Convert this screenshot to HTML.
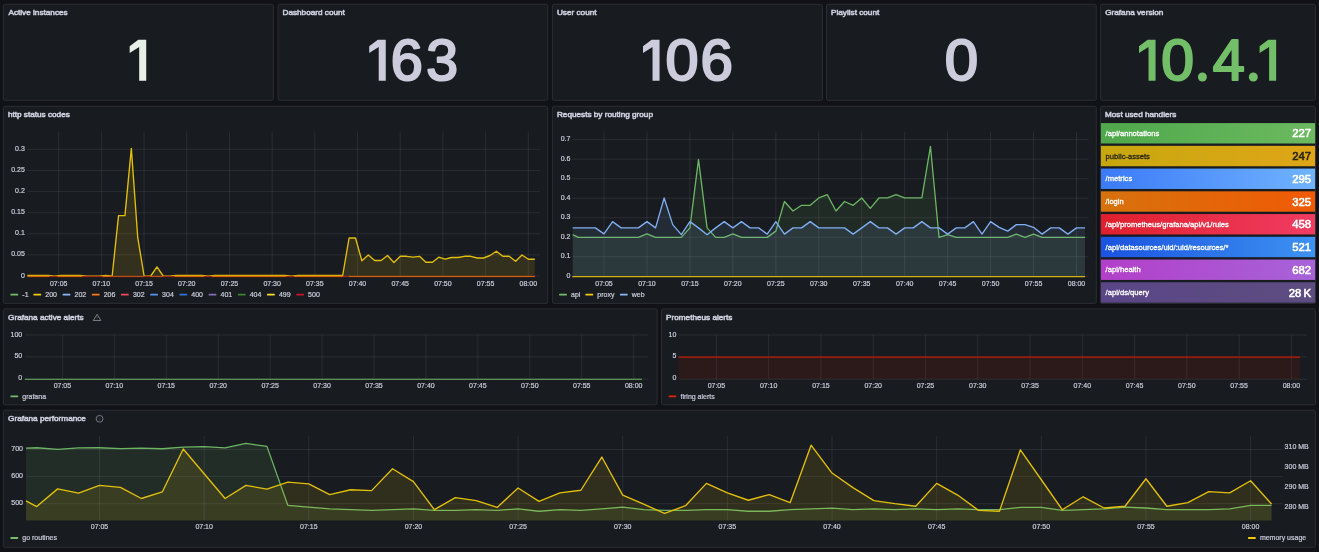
<!DOCTYPE html>
<html><head><meta charset="utf-8"><title>Grafana</title>
<style>
html,body{margin:0;padding:0;background:#111217;}
body{width:1319px;height:552px;overflow:hidden;font-family:"Liberation Sans",sans-serif;}
svg{display:block;font-family:"Liberation Sans",sans-serif;will-change:transform;}
text{white-space:pre;}
.big{letter-spacing:-1px;}
</style></head><body>
<svg width="1319" height="552" viewBox="0 0 1319 552">
<rect width="1319" height="552" fill="#111217"/>
<rect x="3.3" y="4.3" width="270.00" height="96.00" rx="1.6" fill="#181b1f" stroke="#2a2d33" stroke-width="1"/>
<rect x="278.0" y="4.3" width="269.80" height="96.00" rx="1.6" fill="#181b1f" stroke="#2a2d33" stroke-width="1"/>
<rect x="552.4" y="4.3" width="270.00" height="96.00" rx="1.6" fill="#181b1f" stroke="#2a2d33" stroke-width="1"/>
<rect x="826.5" y="4.3" width="269.80" height="96.00" rx="1.6" fill="#181b1f" stroke="#2a2d33" stroke-width="1"/>
<rect x="1100.4" y="4.3" width="215.00" height="96.00" rx="1.6" fill="#181b1f" stroke="#2a2d33" stroke-width="1"/>
<rect x="3.3" y="106.3" width="544.50" height="197.10" rx="1.6" fill="#181b1f" stroke="#2a2d33" stroke-width="1"/>
<rect x="552.4" y="106.3" width="543.90" height="197.10" rx="1.6" fill="#181b1f" stroke="#2a2d33" stroke-width="1"/>
<rect x="1100.4" y="106.3" width="215.00" height="197.10" rx="1.6" fill="#181b1f" stroke="#2a2d33" stroke-width="1"/>
<rect x="3.3" y="308.9" width="653.80" height="95.90" rx="1.6" fill="#181b1f" stroke="#2a2d33" stroke-width="1"/>
<rect x="661.5" y="308.9" width="653.90" height="95.90" rx="1.6" fill="#181b1f" stroke="#2a2d33" stroke-width="1"/>
<rect x="3.3" y="410.2" width="1312.10" height="137.10" rx="1.6" fill="#181b1f" stroke="#2a2d33" stroke-width="1"/>
<text transform="translate(8.46,15.10) scale(1.08,1)" font-size="7.6" text-anchor="start" fill="#ccccdc" font-weight="normal" stroke="#ccccdc" stroke-width="0.55">Active instances</text>
<text transform="translate(282.51,15.10) scale(1.08,1)" font-size="7.6" text-anchor="start" fill="#ccccdc" font-weight="normal" stroke="#ccccdc" stroke-width="0.55">Dashboard count</text>
<text transform="translate(556.95,15.10) scale(1.08,1)" font-size="7.6" text-anchor="start" fill="#ccccdc" font-weight="normal" stroke="#ccccdc" stroke-width="0.55">User count</text>
<text transform="translate(831.01,15.10) scale(1.08,1)" font-size="7.6" text-anchor="start" fill="#ccccdc" font-weight="normal" stroke="#ccccdc" stroke-width="0.55">Playlist count</text>
<text transform="translate(1105.17,15.10) scale(1.08,1)" font-size="7.6" text-anchor="start" fill="#ccccdc" font-weight="normal" stroke="#ccccdc" stroke-width="0.55">Grafana version</text>
<text transform="translate(7.91,117.10) scale(1.08,1)" font-size="7.6" text-anchor="start" fill="#ccccdc" font-weight="normal" stroke="#ccccdc" stroke-width="0.55">http status codes</text>
<text transform="translate(556.91,117.10) scale(1.08,1)" font-size="7.6" text-anchor="start" fill="#ccccdc" font-weight="normal" stroke="#ccccdc" stroke-width="0.55">Requests by routing group</text>
<text transform="translate(1104.91,117.10) scale(1.08,1)" font-size="7.6" text-anchor="start" fill="#ccccdc" font-weight="normal" stroke="#ccccdc" stroke-width="0.55">Most used handlers</text>
<text transform="translate(8.07,319.60) scale(1.08,1)" font-size="7.6" text-anchor="start" fill="#ccccdc" font-weight="normal" stroke="#ccccdc" stroke-width="0.55">Grafana active alerts</text>
<text transform="translate(666.01,319.60) scale(1.08,1)" font-size="7.6" text-anchor="start" fill="#ccccdc" font-weight="normal" stroke="#ccccdc" stroke-width="0.55">Prometheus alerts</text>
<text transform="translate(8.07,421.00) scale(1.08,1)" font-size="7.6" text-anchor="start" fill="#ccccdc" font-weight="normal" stroke="#ccccdc" stroke-width="0.55">Grafana performance</text>
<polygon points="146.22,39.76 138.28,39.76 129.66,46.33 129.66,52.91 139.19,47.01 139.19,80.85 146.22,80.85" fill="#e8efe6"/>
<polygon points="385.76,39.76 377.82,39.76 369.20,46.33 369.20,52.91 378.73,47.01 378.73,80.85 385.76,80.85" fill="#ccccdc"/>
<text transform="translate(390.77,80.34) scale(1.0114,1.0060)" font-size="57.0" fill="#ccccdc" stroke="#ccccdc" stroke-width="2.181" stroke-linejoin="round">6</text>
<text transform="translate(426.32,80.34) scale(1.0028,1.0060)" font-size="57.0" fill="#ccccdc" stroke="#ccccdc" stroke-width="2.190" stroke-linejoin="round">3</text>
<polygon points="659.56,39.76 651.62,39.76 643.00,46.33 643.00,52.91 652.53,47.01 652.53,80.85 659.56,80.85" fill="#ccccdc"/>
<text transform="translate(665.38,80.34) scale(1.0424,1.0060)" font-size="57.0" fill="#ccccdc" stroke="#ccccdc" stroke-width="2.148" stroke-linejoin="round">0</text>
<text transform="translate(700.54,80.34) scale(1.0228,1.0060)" font-size="57.0" fill="#ccccdc" stroke="#ccccdc" stroke-width="2.169" stroke-linejoin="round">6</text>
<text transform="translate(944.75,80.34) scale(1.0534,1.0060)" font-size="57.0" fill="#ccccdc" stroke="#ccccdc" stroke-width="2.137" stroke-linejoin="round">0</text>
<polygon points="1155.56,39.76 1147.62,39.76 1139.00,46.33 1139.00,52.91 1148.53,47.01 1148.53,80.85 1155.56,80.85" fill="#73BF69"/>
<text transform="translate(1161.20,80.34) scale(1.0313,1.0060)" font-size="57.0" fill="#73BF69" stroke="#73BF69" stroke-width="2.160" stroke-linejoin="round">0</text>
<circle cx="1202.4" cy="77.0" r="4.5" fill="#73BF69"/>
<text transform="translate(1212.78,79.75) scale(1.0095,0.9917)" font-size="57.0" fill="#73BF69" stroke="#73BF69" stroke-width="2.199" stroke-linejoin="round">4</text>
<circle cx="1253.3" cy="77.0" r="4.5" fill="#73BF69"/>
<polygon points="1276.16,39.76 1268.22,39.76 1259.60,46.33 1259.60,52.91 1269.13,47.01 1269.13,80.85 1276.16,80.85" fill="#73BF69"/>
<line x1="27.4" x2="539.7" y1="276.00" y2="276.00" stroke="rgba(204,204,220,0.10)" stroke-width="1"/>
<line x1="27.4" x2="539.7" y1="254.89" y2="254.89" stroke="rgba(204,204,220,0.10)" stroke-width="1"/>
<line x1="27.4" x2="539.7" y1="233.78" y2="233.78" stroke="rgba(204,204,220,0.10)" stroke-width="1"/>
<line x1="27.4" x2="539.7" y1="212.68" y2="212.68" stroke="rgba(204,204,220,0.10)" stroke-width="1"/>
<line x1="27.4" x2="539.7" y1="191.57" y2="191.57" stroke="rgba(204,204,220,0.10)" stroke-width="1"/>
<line x1="27.4" x2="539.7" y1="170.46" y2="170.46" stroke="rgba(204,204,220,0.10)" stroke-width="1"/>
<line x1="27.4" x2="539.7" y1="149.35" y2="149.35" stroke="rgba(204,204,220,0.10)" stroke-width="1"/>
<line x1="58.69" x2="58.69" y1="131.5" y2="276.0" stroke="rgba(204,204,220,0.10)" stroke-width="1"/>
<line x1="101.38" x2="101.38" y1="131.5" y2="276.0" stroke="rgba(204,204,220,0.10)" stroke-width="1"/>
<line x1="144.07" x2="144.07" y1="131.5" y2="276.0" stroke="rgba(204,204,220,0.10)" stroke-width="1"/>
<line x1="186.77" x2="186.77" y1="131.5" y2="276.0" stroke="rgba(204,204,220,0.10)" stroke-width="1"/>
<line x1="229.46" x2="229.46" y1="131.5" y2="276.0" stroke="rgba(204,204,220,0.10)" stroke-width="1"/>
<line x1="272.15" x2="272.15" y1="131.5" y2="276.0" stroke="rgba(204,204,220,0.10)" stroke-width="1"/>
<line x1="314.84" x2="314.84" y1="131.5" y2="276.0" stroke="rgba(204,204,220,0.10)" stroke-width="1"/>
<line x1="357.53" x2="357.53" y1="131.5" y2="276.0" stroke="rgba(204,204,220,0.10)" stroke-width="1"/>
<line x1="400.22" x2="400.22" y1="131.5" y2="276.0" stroke="rgba(204,204,220,0.10)" stroke-width="1"/>
<line x1="442.92" x2="442.92" y1="131.5" y2="276.0" stroke="rgba(204,204,220,0.10)" stroke-width="1"/>
<line x1="485.61" x2="485.61" y1="131.5" y2="276.0" stroke="rgba(204,204,220,0.10)" stroke-width="1"/>
<line x1="528.30" x2="528.30" y1="131.5" y2="276.0" stroke="rgba(204,204,220,0.10)" stroke-width="1"/>
<text x="24.80" y="277.50" font-size="7" text-anchor="end" fill="#ccccdc" font-weight="normal" stroke="#ccccdc" stroke-width="0.2">0</text>
<text x="24.80" y="256.39" font-size="7" text-anchor="end" fill="#ccccdc" font-weight="normal" stroke="#ccccdc" stroke-width="0.2">0.05</text>
<text x="24.80" y="235.28" font-size="7" text-anchor="end" fill="#ccccdc" font-weight="normal" stroke="#ccccdc" stroke-width="0.2">0.1</text>
<text x="24.80" y="214.18" font-size="7" text-anchor="end" fill="#ccccdc" font-weight="normal" stroke="#ccccdc" stroke-width="0.2">0.15</text>
<text x="24.80" y="193.07" font-size="7" text-anchor="end" fill="#ccccdc" font-weight="normal" stroke="#ccccdc" stroke-width="0.2">0.2</text>
<text x="24.80" y="171.96" font-size="7" text-anchor="end" fill="#ccccdc" font-weight="normal" stroke="#ccccdc" stroke-width="0.2">0.25</text>
<text x="24.80" y="150.85" font-size="7" text-anchor="end" fill="#ccccdc" font-weight="normal" stroke="#ccccdc" stroke-width="0.2">0.3</text>
<text x="58.69" y="286.30" font-size="7" text-anchor="middle" fill="#ccccdc" font-weight="normal" stroke="#ccccdc" stroke-width="0.2">07:05</text>
<text x="101.38" y="286.30" font-size="7" text-anchor="middle" fill="#ccccdc" font-weight="normal" stroke="#ccccdc" stroke-width="0.2">07:10</text>
<text x="144.07" y="286.30" font-size="7" text-anchor="middle" fill="#ccccdc" font-weight="normal" stroke="#ccccdc" stroke-width="0.2">07:15</text>
<text x="186.77" y="286.30" font-size="7" text-anchor="middle" fill="#ccccdc" font-weight="normal" stroke="#ccccdc" stroke-width="0.2">07:20</text>
<text x="229.46" y="286.30" font-size="7" text-anchor="middle" fill="#ccccdc" font-weight="normal" stroke="#ccccdc" stroke-width="0.2">07:25</text>
<text x="272.15" y="286.30" font-size="7" text-anchor="middle" fill="#ccccdc" font-weight="normal" stroke="#ccccdc" stroke-width="0.2">07:30</text>
<text x="314.84" y="286.30" font-size="7" text-anchor="middle" fill="#ccccdc" font-weight="normal" stroke="#ccccdc" stroke-width="0.2">07:35</text>
<text x="357.53" y="286.30" font-size="7" text-anchor="middle" fill="#ccccdc" font-weight="normal" stroke="#ccccdc" stroke-width="0.2">07:40</text>
<text x="400.22" y="286.30" font-size="7" text-anchor="middle" fill="#ccccdc" font-weight="normal" stroke="#ccccdc" stroke-width="0.2">07:45</text>
<text x="442.92" y="286.30" font-size="7" text-anchor="middle" fill="#ccccdc" font-weight="normal" stroke="#ccccdc" stroke-width="0.2">07:50</text>
<text x="485.61" y="286.30" font-size="7" text-anchor="middle" fill="#ccccdc" font-weight="normal" stroke="#ccccdc" stroke-width="0.2">07:55</text>
<text x="528.30" y="286.30" font-size="7" text-anchor="middle" fill="#ccccdc" font-weight="normal" stroke="#ccccdc" stroke-width="0.2">08:00</text>
<polygon points="27.40,276.3 27.40,275.50 35.29,275.50 41.69,275.50 48.10,275.50 54.50,276.25 60.90,275.50 67.31,275.50 73.71,275.50 80.12,275.50 86.52,276.25 92.92,276.25 99.33,276.25 105.73,275.50 112.14,276.25 118.54,215.60 124.94,215.60 131.35,148.40 137.75,237.70 144.16,276.25 150.56,276.25 156.96,266.90 163.37,276.25 169.77,276.25 176.18,275.50 182.58,275.50 188.98,275.50 195.39,275.50 201.79,275.50 208.20,276.25 214.60,275.50 221.00,275.50 227.41,275.50 233.81,275.50 240.22,275.50 246.62,275.50 253.02,275.50 259.43,275.50 265.83,275.50 272.24,275.50 278.64,275.50 285.04,275.50 291.45,276.25 297.85,275.50 304.26,275.50 310.66,275.50 317.06,275.50 323.47,275.50 329.87,275.50 336.28,275.50 342.68,275.50 349.08,238.00 355.49,238.00 361.89,260.80 368.30,255.00 374.70,260.50 381.10,260.50 387.51,255.50 393.91,262.50 400.32,256.30 406.72,256.30 413.12,257.20 419.53,256.30 425.93,262.20 432.34,262.20 438.74,257.20 445.14,259.20 451.55,257.50 457.95,257.50 464.36,256.30 470.76,256.30 477.16,258.00 483.57,258.00 489.97,255.50 496.38,251.30 502.78,256.30 509.18,256.30 515.59,261.30 521.99,255.00 528.40,259.20 534.80,259.20 534.80,276.3" fill="#F2CC0C" fill-opacity="0.13"/>
<polyline points="27.40,275.50 35.29,275.50 41.69,275.50 48.10,275.50 54.50,276.25 60.90,275.50 67.31,275.50 73.71,275.50 80.12,275.50 86.52,276.25 92.92,276.25 99.33,276.25 105.73,275.50 112.14,276.25 118.54,215.60 124.94,215.60 131.35,148.40 137.75,237.70 144.16,276.25 150.56,276.25 156.96,266.90 163.37,276.25 169.77,276.25 176.18,275.50 182.58,275.50 188.98,275.50 195.39,275.50 201.79,275.50 208.20,276.25 214.60,275.50 221.00,275.50 227.41,275.50 233.81,275.50 240.22,275.50 246.62,275.50 253.02,275.50 259.43,275.50 265.83,275.50 272.24,275.50 278.64,275.50 285.04,275.50 291.45,276.25 297.85,275.50 304.26,275.50 310.66,275.50 317.06,275.50 323.47,275.50 329.87,275.50 336.28,275.50 342.68,275.50 349.08,238.00 355.49,238.00 361.89,260.80 368.30,255.00 374.70,260.50 381.10,260.50 387.51,255.50 393.91,262.50 400.32,256.30 406.72,256.30 413.12,257.20 419.53,256.30 425.93,262.20 432.34,262.20 438.74,257.20 445.14,259.20 451.55,257.50 457.95,257.50 464.36,256.30 470.76,256.30 477.16,258.00 483.57,258.00 489.97,255.50 496.38,251.30 502.78,256.30 509.18,256.30 515.59,261.30 521.99,255.00 528.40,259.20 534.80,259.20" fill="none" stroke="#e3bf0d" stroke-width="1.35" stroke-linejoin="round"/>
<rect x="27.4" y="275.9" width="507.40" height="1.2" fill="#a32a10"/>
<rect x="27.4" y="275.95" width="21.60" height="1.1" fill="#d8600c"/>
<rect x="57.6" y="275.95" width="24.40" height="1.1" fill="#d8600c"/>
<rect x="102.5" y="275.95" width="9.00" height="1.1" fill="#d8600c"/>
<rect x="175" y="275.95" width="29.00" height="1.1" fill="#d8600c"/>
<rect x="212" y="275.95" width="74.00" height="1.1" fill="#d8600c"/>
<rect x="294" y="275.95" width="49.00" height="1.1" fill="#d8600c"/>
<rect x="349" y="275.95" width="185.80" height="1.1" fill="#d8600c"/>
<rect x="111.5" y="275.95" width="32.20" height="1.1" fill="#c04a10"/>
<rect x="150.3" y="275.95" width="12.60" height="1.1" fill="#c04a10"/>
<rect x="10.40" y="293.80" width="7.8" height="1.8" rx="0.6" fill="#73BF69"/>
<text x="22.30" y="297.00" font-size="7" text-anchor="start" fill="#ccccdc" font-weight="normal" stroke="#ccccdc" stroke-width="0.2">-1</text>
<rect x="33.40" y="293.80" width="7.8" height="1.8" rx="0.6" fill="#F2CC0C"/>
<text x="45.30" y="297.00" font-size="7" text-anchor="start" fill="#ccccdc" font-weight="normal" stroke="#ccccdc" stroke-width="0.2">200</text>
<rect x="62.60" y="293.80" width="7.8" height="1.8" rx="0.6" fill="#8AB8FF"/>
<text x="74.50" y="297.00" font-size="7" text-anchor="start" fill="#ccccdc" font-weight="normal" stroke="#ccccdc" stroke-width="0.2">202</text>
<rect x="91.80" y="293.80" width="7.8" height="1.8" rx="0.6" fill="#FF780A"/>
<text x="103.70" y="297.00" font-size="7" text-anchor="start" fill="#ccccdc" font-weight="normal" stroke="#ccccdc" stroke-width="0.2">206</text>
<rect x="121.00" y="293.80" width="7.8" height="1.8" rx="0.6" fill="#F2495C"/>
<text x="132.90" y="297.00" font-size="7" text-anchor="start" fill="#ccccdc" font-weight="normal" stroke="#ccccdc" stroke-width="0.2">302</text>
<rect x="150.20" y="293.80" width="7.8" height="1.8" rx="0.6" fill="#5794F2"/>
<text x="162.10" y="297.00" font-size="7" text-anchor="start" fill="#ccccdc" font-weight="normal" stroke="#ccccdc" stroke-width="0.2">304</text>
<rect x="179.40" y="293.80" width="7.8" height="1.8" rx="0.6" fill="#3274D9"/>
<text x="191.30" y="297.00" font-size="7" text-anchor="start" fill="#ccccdc" font-weight="normal" stroke="#ccccdc" stroke-width="0.2">400</text>
<rect x="208.60" y="293.80" width="7.8" height="1.8" rx="0.6" fill="#806EB7"/>
<text x="220.50" y="297.00" font-size="7" text-anchor="start" fill="#ccccdc" font-weight="normal" stroke="#ccccdc" stroke-width="0.2">401</text>
<rect x="237.80" y="293.80" width="7.8" height="1.8" rx="0.6" fill="#37872D"/>
<text x="249.70" y="297.00" font-size="7" text-anchor="start" fill="#ccccdc" font-weight="normal" stroke="#ccccdc" stroke-width="0.2">404</text>
<rect x="267.00" y="293.80" width="7.8" height="1.8" rx="0.6" fill="#FADE2A"/>
<text x="278.90" y="297.00" font-size="7" text-anchor="start" fill="#ccccdc" font-weight="normal" stroke="#ccccdc" stroke-width="0.2">499</text>
<rect x="296.20" y="293.80" width="7.8" height="1.8" rx="0.6" fill="#C4162A"/>
<text x="308.10" y="297.00" font-size="7" text-anchor="start" fill="#ccccdc" font-weight="normal" stroke="#ccccdc" stroke-width="0.2">500</text>
<line x1="572.2" x2="1088.5" y1="276.30" y2="276.30" stroke="rgba(204,204,220,0.10)" stroke-width="1"/>
<line x1="572.2" x2="1088.5" y1="256.77" y2="256.77" stroke="rgba(204,204,220,0.10)" stroke-width="1"/>
<line x1="572.2" x2="1088.5" y1="237.24" y2="237.24" stroke="rgba(204,204,220,0.10)" stroke-width="1"/>
<line x1="572.2" x2="1088.5" y1="217.71" y2="217.71" stroke="rgba(204,204,220,0.10)" stroke-width="1"/>
<line x1="572.2" x2="1088.5" y1="198.19" y2="198.19" stroke="rgba(204,204,220,0.10)" stroke-width="1"/>
<line x1="572.2" x2="1088.5" y1="178.66" y2="178.66" stroke="rgba(204,204,220,0.10)" stroke-width="1"/>
<line x1="572.2" x2="1088.5" y1="159.13" y2="159.13" stroke="rgba(204,204,220,0.10)" stroke-width="1"/>
<line x1="572.2" x2="1088.5" y1="139.60" y2="139.60" stroke="rgba(204,204,220,0.10)" stroke-width="1"/>
<line x1="604.00" x2="604.00" y1="131.5" y2="276.3" stroke="rgba(204,204,220,0.10)" stroke-width="1"/>
<line x1="646.95" x2="646.95" y1="131.5" y2="276.3" stroke="rgba(204,204,220,0.10)" stroke-width="1"/>
<line x1="689.91" x2="689.91" y1="131.5" y2="276.3" stroke="rgba(204,204,220,0.10)" stroke-width="1"/>
<line x1="732.86" x2="732.86" y1="131.5" y2="276.3" stroke="rgba(204,204,220,0.10)" stroke-width="1"/>
<line x1="775.82" x2="775.82" y1="131.5" y2="276.3" stroke="rgba(204,204,220,0.10)" stroke-width="1"/>
<line x1="818.77" x2="818.77" y1="131.5" y2="276.3" stroke="rgba(204,204,220,0.10)" stroke-width="1"/>
<line x1="861.73" x2="861.73" y1="131.5" y2="276.3" stroke="rgba(204,204,220,0.10)" stroke-width="1"/>
<line x1="904.68" x2="904.68" y1="131.5" y2="276.3" stroke="rgba(204,204,220,0.10)" stroke-width="1"/>
<line x1="947.64" x2="947.64" y1="131.5" y2="276.3" stroke="rgba(204,204,220,0.10)" stroke-width="1"/>
<line x1="990.59" x2="990.59" y1="131.5" y2="276.3" stroke="rgba(204,204,220,0.10)" stroke-width="1"/>
<line x1="1033.55" x2="1033.55" y1="131.5" y2="276.3" stroke="rgba(204,204,220,0.10)" stroke-width="1"/>
<line x1="1076.50" x2="1076.50" y1="131.5" y2="276.3" stroke="rgba(204,204,220,0.10)" stroke-width="1"/>
<text x="570.40" y="277.70" font-size="7" text-anchor="end" fill="#ccccdc" font-weight="normal" stroke="#ccccdc" stroke-width="0.2">0</text>
<text x="570.40" y="258.17" font-size="7" text-anchor="end" fill="#ccccdc" font-weight="normal" stroke="#ccccdc" stroke-width="0.2">0.1</text>
<text x="570.40" y="238.64" font-size="7" text-anchor="end" fill="#ccccdc" font-weight="normal" stroke="#ccccdc" stroke-width="0.2">0.2</text>
<text x="570.40" y="219.11" font-size="7" text-anchor="end" fill="#ccccdc" font-weight="normal" stroke="#ccccdc" stroke-width="0.2">0.3</text>
<text x="570.40" y="199.59" font-size="7" text-anchor="end" fill="#ccccdc" font-weight="normal" stroke="#ccccdc" stroke-width="0.2">0.4</text>
<text x="570.40" y="180.06" font-size="7" text-anchor="end" fill="#ccccdc" font-weight="normal" stroke="#ccccdc" stroke-width="0.2">0.5</text>
<text x="570.40" y="160.53" font-size="7" text-anchor="end" fill="#ccccdc" font-weight="normal" stroke="#ccccdc" stroke-width="0.2">0.6</text>
<text x="570.40" y="141.00" font-size="7" text-anchor="end" fill="#ccccdc" font-weight="normal" stroke="#ccccdc" stroke-width="0.2">0.7</text>
<text x="604.00" y="286.30" font-size="7" text-anchor="middle" fill="#ccccdc" font-weight="normal" stroke="#ccccdc" stroke-width="0.2">07:05</text>
<text x="646.95" y="286.30" font-size="7" text-anchor="middle" fill="#ccccdc" font-weight="normal" stroke="#ccccdc" stroke-width="0.2">07:10</text>
<text x="689.91" y="286.30" font-size="7" text-anchor="middle" fill="#ccccdc" font-weight="normal" stroke="#ccccdc" stroke-width="0.2">07:15</text>
<text x="732.86" y="286.30" font-size="7" text-anchor="middle" fill="#ccccdc" font-weight="normal" stroke="#ccccdc" stroke-width="0.2">07:20</text>
<text x="775.82" y="286.30" font-size="7" text-anchor="middle" fill="#ccccdc" font-weight="normal" stroke="#ccccdc" stroke-width="0.2">07:25</text>
<text x="818.77" y="286.30" font-size="7" text-anchor="middle" fill="#ccccdc" font-weight="normal" stroke="#ccccdc" stroke-width="0.2">07:30</text>
<text x="861.73" y="286.30" font-size="7" text-anchor="middle" fill="#ccccdc" font-weight="normal" stroke="#ccccdc" stroke-width="0.2">07:35</text>
<text x="904.68" y="286.30" font-size="7" text-anchor="middle" fill="#ccccdc" font-weight="normal" stroke="#ccccdc" stroke-width="0.2">07:40</text>
<text x="947.64" y="286.30" font-size="7" text-anchor="middle" fill="#ccccdc" font-weight="normal" stroke="#ccccdc" stroke-width="0.2">07:45</text>
<text x="990.59" y="286.30" font-size="7" text-anchor="middle" fill="#ccccdc" font-weight="normal" stroke="#ccccdc" stroke-width="0.2">07:50</text>
<text x="1033.55" y="286.30" font-size="7" text-anchor="middle" fill="#ccccdc" font-weight="normal" stroke="#ccccdc" stroke-width="0.2">07:55</text>
<text x="1076.50" y="286.30" font-size="7" text-anchor="middle" fill="#ccccdc" font-weight="normal" stroke="#ccccdc" stroke-width="0.2">08:00</text>
<polygon points="572.70,276.3 572.70,234.68 578.23,237.40 586.82,237.40 595.41,237.40 604.00,237.40 612.59,237.40 621.18,237.40 629.77,237.40 638.36,237.40 646.95,233.86 655.55,237.40 664.14,237.40 672.73,237.40 681.32,237.40 689.91,227.88 698.50,159.36 707.09,227.88 715.68,237.40 724.27,237.40 732.86,233.86 741.45,237.40 750.05,237.40 758.64,237.40 767.23,237.40 775.82,231.14 784.41,201.51 793.00,211.02 801.59,205.31 810.18,205.31 818.77,197.97 827.36,194.71 835.95,211.02 844.55,201.51 853.14,205.31 861.73,197.97 870.32,208.30 878.91,197.97 887.50,197.97 896.09,194.71 904.68,197.97 913.27,197.97 921.86,197.97 930.45,146.31 939.05,237.40 947.64,234.68 956.23,237.40 964.82,237.40 973.41,237.40 982.00,237.40 990.59,237.40 999.18,237.40 1007.77,237.40 1016.36,234.13 1024.95,237.40 1033.55,234.13 1042.14,237.40 1050.73,237.40 1059.32,237.40 1067.91,237.40 1076.50,237.40 1085.09,237.40 1085.09,276.3" fill="#73BF69" fill-opacity="0.1"/>
<polyline points="572.70,234.68 578.23,237.40 586.82,237.40 595.41,237.40 604.00,237.40 612.59,237.40 621.18,237.40 629.77,237.40 638.36,237.40 646.95,233.86 655.55,237.40 664.14,237.40 672.73,237.40 681.32,237.40 689.91,227.88 698.50,159.36 707.09,227.88 715.68,237.40 724.27,237.40 732.86,233.86 741.45,237.40 750.05,237.40 758.64,237.40 767.23,237.40 775.82,231.14 784.41,201.51 793.00,211.02 801.59,205.31 810.18,205.31 818.77,197.97 827.36,194.71 835.95,211.02 844.55,201.51 853.14,205.31 861.73,197.97 870.32,208.30 878.91,197.97 887.50,197.97 896.09,194.71 904.68,197.97 913.27,197.97 921.86,197.97 930.45,146.31 939.05,237.40 947.64,234.68 956.23,237.40 964.82,237.40 973.41,237.40 982.00,237.40 990.59,237.40 999.18,237.40 1007.77,237.40 1016.36,234.13 1024.95,237.40 1033.55,234.13 1042.14,237.40 1050.73,237.40 1059.32,237.40 1067.91,237.40 1076.50,237.40 1085.09,237.40" fill="none" stroke="#6cb663" stroke-width="1.3" stroke-linejoin="round"/>
<polygon points="572.70,276.3 572.70,227.88 578.23,227.88 586.82,227.88 595.41,227.88 604.00,233.86 612.59,221.63 621.18,227.88 629.77,227.88 638.36,227.88 646.95,221.63 655.55,227.88 664.14,197.97 672.73,224.62 681.32,234.68 689.91,221.63 698.50,227.88 707.09,234.68 715.68,227.88 724.27,221.63 732.86,227.88 741.45,221.63 750.05,227.88 758.64,227.88 767.23,234.13 775.82,221.63 784.41,234.13 793.00,227.88 801.59,227.88 810.18,221.63 818.77,227.88 827.36,227.88 835.95,227.88 844.55,227.88 853.14,234.13 861.73,227.88 870.32,221.63 878.91,227.88 887.50,227.88 896.09,234.13 904.68,227.88 913.27,227.88 921.86,221.63 930.45,227.88 939.05,227.88 947.64,234.13 956.23,227.88 964.82,227.88 973.41,221.63 982.00,234.13 990.59,221.63 999.18,227.34 1007.77,231.14 1016.36,224.62 1024.95,224.62 1033.55,227.34 1042.14,234.13 1050.73,227.88 1059.32,227.88 1067.91,234.13 1076.50,227.88 1085.09,227.88 1085.09,276.3" fill="#8AB8FF" fill-opacity="0.1"/>
<polyline points="572.70,227.88 578.23,227.88 586.82,227.88 595.41,227.88 604.00,233.86 612.59,221.63 621.18,227.88 629.77,227.88 638.36,227.88 646.95,221.63 655.55,227.88 664.14,197.97 672.73,224.62 681.32,234.68 689.91,221.63 698.50,227.88 707.09,234.68 715.68,227.88 724.27,221.63 732.86,227.88 741.45,221.63 750.05,227.88 758.64,227.88 767.23,234.13 775.82,221.63 784.41,234.13 793.00,227.88 801.59,227.88 810.18,221.63 818.77,227.88 827.36,227.88 835.95,227.88 844.55,227.88 853.14,234.13 861.73,227.88 870.32,221.63 878.91,227.88 887.50,227.88 896.09,234.13 904.68,227.88 913.27,227.88 921.86,221.63 930.45,227.88 939.05,227.88 947.64,234.13 956.23,227.88 964.82,227.88 973.41,221.63 982.00,234.13 990.59,221.63 999.18,227.34 1007.77,231.14 1016.36,224.62 1024.95,224.62 1033.55,227.34 1042.14,234.13 1050.73,227.88 1059.32,227.88 1067.91,234.13 1076.50,227.88 1085.09,227.88" fill="none" stroke="#82aff4" stroke-width="1.3" stroke-linejoin="round"/>
<line x1="572.2" x2="1085.09" y1="276.6" y2="276.6" stroke="#d2b012" stroke-width="1.15"/>
<rect x="559.10" y="293.80" width="7.8" height="1.8" rx="0.6" fill="#73BF69"/>
<text x="571.00" y="297.00" font-size="7" text-anchor="start" fill="#ccccdc" font-weight="normal" stroke="#ccccdc" stroke-width="0.2">api</text>
<rect x="585.40" y="293.80" width="7.8" height="1.8" rx="0.6" fill="#F2CC0C"/>
<text x="597.30" y="297.00" font-size="7" text-anchor="start" fill="#ccccdc" font-weight="normal" stroke="#ccccdc" stroke-width="0.2">proxy</text>
<rect x="619.90" y="293.80" width="7.8" height="1.8" rx="0.6" fill="#8AB8FF"/>
<text x="631.80" y="297.00" font-size="7" text-anchor="start" fill="#ccccdc" font-weight="normal" stroke="#ccccdc" stroke-width="0.2">web</text>
<defs>
<linearGradient id="g0" x1="0" x2="1" y1="0" y2="0"><stop offset="0" stop-color="#4fa84b"/><stop offset="1" stop-color="#6cb960"/></linearGradient>
<linearGradient id="g1" x1="0" x2="1" y1="0" y2="0"><stop offset="0" stop-color="#c7a70e"/><stop offset="1" stop-color="#dfa617"/></linearGradient>
<linearGradient id="g2" x1="0" x2="1" y1="0" y2="0"><stop offset="0" stop-color="#3b7af7"/><stop offset="1" stop-color="#70b3ff"/></linearGradient>
<linearGradient id="g3" x1="0" x2="1" y1="0" y2="0"><stop offset="0" stop-color="#d6720c"/><stop offset="1" stop-color="#f05a04"/></linearGradient>
<linearGradient id="g4" x1="0" x2="1" y1="0" y2="0"><stop offset="0" stop-color="#df1f2d"/><stop offset="1" stop-color="#f13c62"/></linearGradient>
<linearGradient id="g5" x1="0" x2="1" y1="0" y2="0"><stop offset="0" stop-color="#1a53e0"/><stop offset="1" stop-color="#3d92f2"/></linearGradient>
<linearGradient id="g6" x1="0" x2="1" y1="0" y2="0"><stop offset="0" stop-color="#b23fc9"/><stop offset="1" stop-color="#a763d9"/></linearGradient>
<linearGradient id="g7" x1="0" x2="1" y1="0" y2="0"><stop offset="0" stop-color="#5a4687"/><stop offset="1" stop-color="#5d4c80"/></linearGradient>
</defs>
<rect x="1100.9" y="123.10" width="214.2" height="20.4" fill="url(#g0)"/>
<text x="1105.60" y="135.90" font-size="7.6" text-anchor="start" fill="#fff" font-weight="normal" stroke="#fff" stroke-width="0.3">/api/annotations</text>
<text x="1311.00" y="137.40" font-size="11.3" text-anchor="end" fill="#fff" font-weight="normal" stroke="#fff" stroke-width="0.6" word-spacing="-1">227</text>
<rect x="1100.9" y="145.84" width="214.2" height="20.4" fill="url(#g1)"/>
<text x="1105.60" y="158.64" font-size="7.6" text-anchor="start" fill="#2a2512" font-weight="normal" stroke="#2a2512" stroke-width="0.3">public-assets</text>
<text x="1311.00" y="160.14" font-size="11.3" text-anchor="end" fill="#2a2512" font-weight="normal" stroke="#2a2512" stroke-width="0.6" word-spacing="-1">247</text>
<rect x="1100.9" y="168.58" width="214.2" height="20.4" fill="url(#g2)"/>
<text x="1105.60" y="181.38" font-size="7.6" text-anchor="start" fill="#fff" font-weight="normal" stroke="#fff" stroke-width="0.3">/metrics</text>
<text x="1311.00" y="182.88" font-size="11.3" text-anchor="end" fill="#fff" font-weight="normal" stroke="#fff" stroke-width="0.6" word-spacing="-1">295</text>
<rect x="1100.9" y="191.32" width="214.2" height="20.4" fill="url(#g3)"/>
<text x="1105.60" y="204.12" font-size="7.6" text-anchor="start" fill="#fff" font-weight="normal" stroke="#fff" stroke-width="0.3">/login</text>
<text x="1311.00" y="205.62" font-size="11.3" text-anchor="end" fill="#fff" font-weight="normal" stroke="#fff" stroke-width="0.6" word-spacing="-1">325</text>
<rect x="1100.9" y="214.06" width="214.2" height="20.4" fill="url(#g4)"/>
<text x="1105.60" y="226.86" font-size="7.6" text-anchor="start" fill="#fff" font-weight="normal" stroke="#fff" stroke-width="0.3">/api/prometheus/grafana/api/v1/rules</text>
<text x="1311.00" y="228.36" font-size="11.3" text-anchor="end" fill="#fff" font-weight="normal" stroke="#fff" stroke-width="0.6" word-spacing="-1">458</text>
<rect x="1100.9" y="236.80" width="214.2" height="20.4" fill="url(#g5)"/>
<text x="1105.60" y="249.60" font-size="7.6" text-anchor="start" fill="#fff" font-weight="normal" stroke="#fff" stroke-width="0.3">/api/datasources/uid/:uid/resources/*</text>
<text x="1311.00" y="251.10" font-size="11.3" text-anchor="end" fill="#fff" font-weight="normal" stroke="#fff" stroke-width="0.6" word-spacing="-1">521</text>
<rect x="1100.9" y="259.54" width="214.2" height="20.4" fill="url(#g6)"/>
<text x="1105.60" y="272.34" font-size="7.6" text-anchor="start" fill="#fff" font-weight="normal" stroke="#fff" stroke-width="0.3">/api/health</text>
<text x="1311.00" y="273.84" font-size="11.3" text-anchor="end" fill="#fff" font-weight="normal" stroke="#fff" stroke-width="0.6" word-spacing="-1">682</text>
<rect x="1100.9" y="282.28" width="214.2" height="20.4" fill="url(#g7)"/>
<text x="1105.60" y="295.08" font-size="7.6" text-anchor="start" fill="#fff" font-weight="normal" stroke="#fff" stroke-width="0.3">/api/ds/query</text>
<text x="1311.00" y="296.58" font-size="11.3" text-anchor="end" fill="#fff" font-weight="normal" stroke="#fff" stroke-width="0.6" word-spacing="-1">28 K</text>
<line x1="24.8" x2="648.0" y1="335.00" y2="335.00" stroke="rgba(204,204,220,0.10)" stroke-width="1"/>
<line x1="24.8" x2="648.0" y1="356.90" y2="356.90" stroke="rgba(204,204,220,0.10)" stroke-width="1"/>
<line x1="24.8" x2="648.0" y1="379.20" y2="379.20" stroke="rgba(204,204,220,0.10)" stroke-width="1"/>
<line x1="62.40" x2="62.40" y1="335" y2="379.2" stroke="rgba(204,204,220,0.10)" stroke-width="1"/>
<line x1="114.34" x2="114.34" y1="335" y2="379.2" stroke="rgba(204,204,220,0.10)" stroke-width="1"/>
<line x1="166.27" x2="166.27" y1="335" y2="379.2" stroke="rgba(204,204,220,0.10)" stroke-width="1"/>
<line x1="218.21" x2="218.21" y1="335" y2="379.2" stroke="rgba(204,204,220,0.10)" stroke-width="1"/>
<line x1="270.15" x2="270.15" y1="335" y2="379.2" stroke="rgba(204,204,220,0.10)" stroke-width="1"/>
<line x1="322.08" x2="322.08" y1="335" y2="379.2" stroke="rgba(204,204,220,0.10)" stroke-width="1"/>
<line x1="374.02" x2="374.02" y1="335" y2="379.2" stroke="rgba(204,204,220,0.10)" stroke-width="1"/>
<line x1="425.95" x2="425.95" y1="335" y2="379.2" stroke="rgba(204,204,220,0.10)" stroke-width="1"/>
<line x1="477.89" x2="477.89" y1="335" y2="379.2" stroke="rgba(204,204,220,0.10)" stroke-width="1"/>
<line x1="529.83" x2="529.83" y1="335" y2="379.2" stroke="rgba(204,204,220,0.10)" stroke-width="1"/>
<line x1="581.76" x2="581.76" y1="335" y2="379.2" stroke="rgba(204,204,220,0.10)" stroke-width="1"/>
<line x1="633.70" x2="633.70" y1="335" y2="379.2" stroke="rgba(204,204,220,0.10)" stroke-width="1"/>
<text x="22.20" y="336.60" font-size="7" text-anchor="end" fill="#ccccdc" font-weight="normal" stroke="#ccccdc" stroke-width="0.2">100</text>
<text x="22.20" y="358.40" font-size="7" text-anchor="end" fill="#ccccdc" font-weight="normal" stroke="#ccccdc" stroke-width="0.2">50</text>
<text x="22.20" y="380.30" font-size="7" text-anchor="end" fill="#ccccdc" font-weight="normal" stroke="#ccccdc" stroke-width="0.2">0</text>
<text x="62.40" y="387.60" font-size="7" text-anchor="middle" fill="#ccccdc" font-weight="normal" stroke="#ccccdc" stroke-width="0.2">07:05</text>
<text x="114.34" y="387.60" font-size="7" text-anchor="middle" fill="#ccccdc" font-weight="normal" stroke="#ccccdc" stroke-width="0.2">07:10</text>
<text x="166.27" y="387.60" font-size="7" text-anchor="middle" fill="#ccccdc" font-weight="normal" stroke="#ccccdc" stroke-width="0.2">07:15</text>
<text x="218.21" y="387.60" font-size="7" text-anchor="middle" fill="#ccccdc" font-weight="normal" stroke="#ccccdc" stroke-width="0.2">07:20</text>
<text x="270.15" y="387.60" font-size="7" text-anchor="middle" fill="#ccccdc" font-weight="normal" stroke="#ccccdc" stroke-width="0.2">07:25</text>
<text x="322.08" y="387.60" font-size="7" text-anchor="middle" fill="#ccccdc" font-weight="normal" stroke="#ccccdc" stroke-width="0.2">07:30</text>
<text x="374.02" y="387.60" font-size="7" text-anchor="middle" fill="#ccccdc" font-weight="normal" stroke="#ccccdc" stroke-width="0.2">07:35</text>
<text x="425.95" y="387.60" font-size="7" text-anchor="middle" fill="#ccccdc" font-weight="normal" stroke="#ccccdc" stroke-width="0.2">07:40</text>
<text x="477.89" y="387.60" font-size="7" text-anchor="middle" fill="#ccccdc" font-weight="normal" stroke="#ccccdc" stroke-width="0.2">07:45</text>
<text x="529.83" y="387.60" font-size="7" text-anchor="middle" fill="#ccccdc" font-weight="normal" stroke="#ccccdc" stroke-width="0.2">07:50</text>
<text x="581.76" y="387.60" font-size="7" text-anchor="middle" fill="#ccccdc" font-weight="normal" stroke="#ccccdc" stroke-width="0.2">07:55</text>
<text x="633.70" y="387.60" font-size="7" text-anchor="middle" fill="#ccccdc" font-weight="normal" stroke="#ccccdc" stroke-width="0.2">08:00</text>
<line x1="24.8" x2="641.9" y1="379.2" y2="379.2" stroke="#6cb663" stroke-width="1.15"/>
<rect x="10.40" y="395.40" width="7.8" height="1.8" rx="0.6" fill="#73BF69"/>
<text x="22.30" y="398.60" font-size="7" text-anchor="start" fill="#ccccdc" font-weight="normal" stroke="#ccccdc" stroke-width="0.2">grafana</text>
<path d="M97.1 314.3 L100.9 320.5 L93.3 320.5 Z" fill="none" stroke="#858693" stroke-width="0.9" stroke-linejoin="round"/>
<path d="M97.1 316.6 V318.4 M97.1 319.2 V319.6" fill="none" stroke="#858693" stroke-width="0.6" stroke-opacity="0.7"/>
<line x1="678.5" x2="1307" y1="335.00" y2="335.00" stroke="rgba(204,204,220,0.10)" stroke-width="1"/>
<line x1="678.5" x2="1307" y1="356.90" y2="356.90" stroke="rgba(204,204,220,0.10)" stroke-width="1"/>
<line x1="678.5" x2="1307" y1="379.20" y2="379.20" stroke="rgba(204,204,220,0.10)" stroke-width="1"/>
<line x1="716.40" x2="716.40" y1="335" y2="379.2" stroke="rgba(204,204,220,0.10)" stroke-width="1"/>
<line x1="768.67" x2="768.67" y1="335" y2="379.2" stroke="rgba(204,204,220,0.10)" stroke-width="1"/>
<line x1="820.95" x2="820.95" y1="335" y2="379.2" stroke="rgba(204,204,220,0.10)" stroke-width="1"/>
<line x1="873.22" x2="873.22" y1="335" y2="379.2" stroke="rgba(204,204,220,0.10)" stroke-width="1"/>
<line x1="925.49" x2="925.49" y1="335" y2="379.2" stroke="rgba(204,204,220,0.10)" stroke-width="1"/>
<line x1="977.76" x2="977.76" y1="335" y2="379.2" stroke="rgba(204,204,220,0.10)" stroke-width="1"/>
<line x1="1030.04" x2="1030.04" y1="335" y2="379.2" stroke="rgba(204,204,220,0.10)" stroke-width="1"/>
<line x1="1082.31" x2="1082.31" y1="335" y2="379.2" stroke="rgba(204,204,220,0.10)" stroke-width="1"/>
<line x1="1134.58" x2="1134.58" y1="335" y2="379.2" stroke="rgba(204,204,220,0.10)" stroke-width="1"/>
<line x1="1186.85" x2="1186.85" y1="335" y2="379.2" stroke="rgba(204,204,220,0.10)" stroke-width="1"/>
<line x1="1239.13" x2="1239.13" y1="335" y2="379.2" stroke="rgba(204,204,220,0.10)" stroke-width="1"/>
<line x1="1291.40" x2="1291.40" y1="335" y2="379.2" stroke="rgba(204,204,220,0.10)" stroke-width="1"/>
<text x="676.40" y="336.60" font-size="7" text-anchor="end" fill="#ccccdc" font-weight="normal" stroke="#ccccdc" stroke-width="0.2">10</text>
<text x="676.40" y="358.40" font-size="7" text-anchor="end" fill="#ccccdc" font-weight="normal" stroke="#ccccdc" stroke-width="0.2">5</text>
<text x="676.40" y="380.30" font-size="7" text-anchor="end" fill="#ccccdc" font-weight="normal" stroke="#ccccdc" stroke-width="0.2">0</text>
<text x="716.40" y="387.60" font-size="7" text-anchor="middle" fill="#ccccdc" font-weight="normal" stroke="#ccccdc" stroke-width="0.2">07:05</text>
<text x="768.67" y="387.60" font-size="7" text-anchor="middle" fill="#ccccdc" font-weight="normal" stroke="#ccccdc" stroke-width="0.2">07:10</text>
<text x="820.95" y="387.60" font-size="7" text-anchor="middle" fill="#ccccdc" font-weight="normal" stroke="#ccccdc" stroke-width="0.2">07:15</text>
<text x="873.22" y="387.60" font-size="7" text-anchor="middle" fill="#ccccdc" font-weight="normal" stroke="#ccccdc" stroke-width="0.2">07:20</text>
<text x="925.49" y="387.60" font-size="7" text-anchor="middle" fill="#ccccdc" font-weight="normal" stroke="#ccccdc" stroke-width="0.2">07:25</text>
<text x="977.76" y="387.60" font-size="7" text-anchor="middle" fill="#ccccdc" font-weight="normal" stroke="#ccccdc" stroke-width="0.2">07:30</text>
<text x="1030.04" y="387.60" font-size="7" text-anchor="middle" fill="#ccccdc" font-weight="normal" stroke="#ccccdc" stroke-width="0.2">07:35</text>
<text x="1082.31" y="387.60" font-size="7" text-anchor="middle" fill="#ccccdc" font-weight="normal" stroke="#ccccdc" stroke-width="0.2">07:40</text>
<text x="1134.58" y="387.60" font-size="7" text-anchor="middle" fill="#ccccdc" font-weight="normal" stroke="#ccccdc" stroke-width="0.2">07:45</text>
<text x="1186.85" y="387.60" font-size="7" text-anchor="middle" fill="#ccccdc" font-weight="normal" stroke="#ccccdc" stroke-width="0.2">07:50</text>
<text x="1239.13" y="387.60" font-size="7" text-anchor="middle" fill="#ccccdc" font-weight="normal" stroke="#ccccdc" stroke-width="0.2">07:55</text>
<text x="1291.40" y="387.60" font-size="7" text-anchor="middle" fill="#ccccdc" font-weight="normal" stroke="#ccccdc" stroke-width="0.2">08:00</text>
<rect x="678.5" y="356.9" width="621.5" height="22.30000000000001" fill="#bf1b00" fill-opacity="0.12"/>
<line x1="678.5" x2="1300" y1="357.1" y2="357.1" stroke="#bf1b00" stroke-width="1.2"/>
<rect x="668.60" y="395.40" width="7.8" height="1.8" rx="0.6" fill="#e0260a"/>
<text x="680.50" y="398.60" font-size="7" text-anchor="start" fill="#ccccdc" font-weight="normal" stroke="#ccccdc" stroke-width="0.2">firing alerts</text>
<line x1="26.0" x2="1282.5" y1="449.50" y2="449.50" stroke="rgba(204,204,220,0.10)" stroke-width="1"/>
<line x1="26.0" x2="1282.5" y1="476.60" y2="476.60" stroke="rgba(204,204,220,0.10)" stroke-width="1"/>
<line x1="26.0" x2="1282.5" y1="503.70" y2="503.70" stroke="rgba(204,204,220,0.10)" stroke-width="1"/>
<line x1="99.50" x2="99.50" y1="436.2" y2="520.5" stroke="rgba(204,204,220,0.10)" stroke-width="1"/>
<line x1="204.15" x2="204.15" y1="436.2" y2="520.5" stroke="rgba(204,204,220,0.10)" stroke-width="1"/>
<line x1="308.79" x2="308.79" y1="436.2" y2="520.5" stroke="rgba(204,204,220,0.10)" stroke-width="1"/>
<line x1="413.44" x2="413.44" y1="436.2" y2="520.5" stroke="rgba(204,204,220,0.10)" stroke-width="1"/>
<line x1="518.08" x2="518.08" y1="436.2" y2="520.5" stroke="rgba(204,204,220,0.10)" stroke-width="1"/>
<line x1="622.73" x2="622.73" y1="436.2" y2="520.5" stroke="rgba(204,204,220,0.10)" stroke-width="1"/>
<line x1="727.37" x2="727.37" y1="436.2" y2="520.5" stroke="rgba(204,204,220,0.10)" stroke-width="1"/>
<line x1="832.02" x2="832.02" y1="436.2" y2="520.5" stroke="rgba(204,204,220,0.10)" stroke-width="1"/>
<line x1="936.66" x2="936.66" y1="436.2" y2="520.5" stroke="rgba(204,204,220,0.10)" stroke-width="1"/>
<line x1="1041.31" x2="1041.31" y1="436.2" y2="520.5" stroke="rgba(204,204,220,0.10)" stroke-width="1"/>
<line x1="1145.95" x2="1145.95" y1="436.2" y2="520.5" stroke="rgba(204,204,220,0.10)" stroke-width="1"/>
<line x1="1250.60" x2="1250.60" y1="436.2" y2="520.5" stroke="rgba(204,204,220,0.10)" stroke-width="1"/>
<text x="23.00" y="450.80" font-size="7" text-anchor="end" fill="#ccccdc" font-weight="normal" stroke="#ccccdc" stroke-width="0.2">700</text>
<text x="23.00" y="478.20" font-size="7" text-anchor="end" fill="#ccccdc" font-weight="normal" stroke="#ccccdc" stroke-width="0.2">600</text>
<text x="23.00" y="505.30" font-size="7" text-anchor="end" fill="#ccccdc" font-weight="normal" stroke="#ccccdc" stroke-width="0.2">500</text>
<text x="1284.60" y="449.10" font-size="7" text-anchor="start" fill="#ccccdc" font-weight="normal" stroke="#ccccdc" stroke-width="0.2">310 MB</text>
<text x="1284.60" y="469.10" font-size="7" text-anchor="start" fill="#ccccdc" font-weight="normal" stroke="#ccccdc" stroke-width="0.2">300 MB</text>
<text x="1284.60" y="489.00" font-size="7" text-anchor="start" fill="#ccccdc" font-weight="normal" stroke="#ccccdc" stroke-width="0.2">290 MB</text>
<text x="1284.60" y="509.00" font-size="7" text-anchor="start" fill="#ccccdc" font-weight="normal" stroke="#ccccdc" stroke-width="0.2">280 MB</text>
<text x="99.50" y="529.30" font-size="7" text-anchor="middle" fill="#ccccdc" font-weight="normal" stroke="#ccccdc" stroke-width="0.2">07:05</text>
<text x="204.15" y="529.30" font-size="7" text-anchor="middle" fill="#ccccdc" font-weight="normal" stroke="#ccccdc" stroke-width="0.2">07:10</text>
<text x="308.79" y="529.30" font-size="7" text-anchor="middle" fill="#ccccdc" font-weight="normal" stroke="#ccccdc" stroke-width="0.2">07:15</text>
<text x="413.44" y="529.30" font-size="7" text-anchor="middle" fill="#ccccdc" font-weight="normal" stroke="#ccccdc" stroke-width="0.2">07:20</text>
<text x="518.08" y="529.30" font-size="7" text-anchor="middle" fill="#ccccdc" font-weight="normal" stroke="#ccccdc" stroke-width="0.2">07:25</text>
<text x="622.73" y="529.30" font-size="7" text-anchor="middle" fill="#ccccdc" font-weight="normal" stroke="#ccccdc" stroke-width="0.2">07:30</text>
<text x="727.37" y="529.30" font-size="7" text-anchor="middle" fill="#ccccdc" font-weight="normal" stroke="#ccccdc" stroke-width="0.2">07:35</text>
<text x="832.02" y="529.30" font-size="7" text-anchor="middle" fill="#ccccdc" font-weight="normal" stroke="#ccccdc" stroke-width="0.2">07:40</text>
<text x="936.66" y="529.30" font-size="7" text-anchor="middle" fill="#ccccdc" font-weight="normal" stroke="#ccccdc" stroke-width="0.2">07:45</text>
<text x="1041.31" y="529.30" font-size="7" text-anchor="middle" fill="#ccccdc" font-weight="normal" stroke="#ccccdc" stroke-width="0.2">07:50</text>
<text x="1145.95" y="529.30" font-size="7" text-anchor="middle" fill="#ccccdc" font-weight="normal" stroke="#ccccdc" stroke-width="0.2">07:55</text>
<text x="1250.60" y="529.30" font-size="7" text-anchor="middle" fill="#ccccdc" font-weight="normal" stroke="#ccccdc" stroke-width="0.2">08:00</text>
<polygon points="26.00,520.5 26.00,448.08 36.71,447.73 57.64,449.28 78.57,447.90 99.50,447.73 120.43,448.59 141.36,448.08 162.29,448.76 183.22,447.21 204.15,446.53 225.07,447.90 246.00,443.43 266.93,446.35 287.86,505.40 308.79,507.12 329.72,508.84 350.65,509.53 371.58,510.39 392.51,509.70 413.44,508.84 434.37,510.39 455.29,510.39 476.22,509.70 497.15,510.39 518.08,508.84 539.01,511.25 559.94,509.53 580.87,510.39 601.80,508.84 622.73,507.12 643.66,509.53 664.59,510.39 685.51,510.39 706.44,509.70 727.37,509.70 748.30,511.25 769.23,511.25 790.16,509.70 811.09,508.84 832.02,508.15 852.95,509.70 873.88,508.84 894.81,509.70 915.73,508.84 936.66,509.70 957.59,508.84 978.52,509.53 999.45,509.53 1020.38,507.47 1041.31,507.47 1062.24,510.39 1083.17,509.70 1104.10,508.84 1125.03,507.12 1145.95,507.98 1166.88,509.70 1187.81,509.70 1208.74,509.70 1229.67,508.84 1250.60,505.40 1271.53,505.40 1271.53,520.5" fill="#73BF69" fill-opacity="0.11"/>
<polyline points="26.00,448.08 36.71,447.73 57.64,449.28 78.57,447.90 99.50,447.73 120.43,448.59 141.36,448.08 162.29,448.76 183.22,447.21 204.15,446.53 225.07,447.90 246.00,443.43 266.93,446.35 287.86,505.40 308.79,507.12 329.72,508.84 350.65,509.53 371.58,510.39 392.51,509.70 413.44,508.84 434.37,510.39 455.29,510.39 476.22,509.70 497.15,510.39 518.08,508.84 539.01,511.25 559.94,509.53 580.87,510.39 601.80,508.84 622.73,507.12 643.66,509.53 664.59,510.39 685.51,510.39 706.44,509.70 727.37,509.70 748.30,511.25 769.23,511.25 790.16,509.70 811.09,508.84 832.02,508.15 852.95,509.70 873.88,508.84 894.81,509.70 915.73,508.84 936.66,509.70 957.59,508.84 978.52,509.53 999.45,509.53 1020.38,507.47 1041.31,507.47 1062.24,510.39 1083.17,509.70 1104.10,508.84 1125.03,507.12 1145.95,507.98 1166.88,509.70 1187.81,509.70 1208.74,509.70 1229.67,508.84 1250.60,505.40 1271.53,505.40" fill="none" stroke="#6cb663" stroke-width="1.3" stroke-linejoin="round"/>
<polygon points="26.00,520.5 26.00,500.92 36.71,506.61 57.64,488.87 78.57,493.18 99.50,485.43 120.43,487.32 141.36,498.51 162.29,491.97 183.22,448.94 204.15,473.73 225.07,498.51 246.00,485.43 266.93,489.05 287.86,482.16 308.79,483.88 329.72,494.56 350.65,489.73 371.58,490.60 392.51,468.73 413.44,481.64 434.37,509.70 455.29,497.65 476.22,500.58 497.15,507.47 518.08,488.01 539.01,501.44 559.94,492.83 580.87,490.25 601.80,457.03 622.73,495.07 643.66,504.20 664.59,513.49 685.51,505.74 706.44,483.37 727.37,492.83 748.30,500.24 769.23,494.56 790.16,502.65 811.09,445.15 832.02,473.04 852.95,487.67 873.88,500.58 894.81,503.68 915.73,506.26 936.66,483.37 957.59,495.07 978.52,510.39 999.45,511.25 1020.38,449.80 1041.31,479.75 1062.24,509.70 1083.17,496.79 1104.10,507.98 1125.03,506.26 1145.95,478.72 1166.88,506.26 1187.81,502.65 1208.74,491.63 1229.67,492.83 1250.60,480.78 1271.53,504.02 1271.53,520.5" fill="#F2CC0C" fill-opacity="0.11"/>
<polyline points="26.00,500.92 36.71,506.61 57.64,488.87 78.57,493.18 99.50,485.43 120.43,487.32 141.36,498.51 162.29,491.97 183.22,448.94 204.15,473.73 225.07,498.51 246.00,485.43 266.93,489.05 287.86,482.16 308.79,483.88 329.72,494.56 350.65,489.73 371.58,490.60 392.51,468.73 413.44,481.64 434.37,509.70 455.29,497.65 476.22,500.58 497.15,507.47 518.08,488.01 539.01,501.44 559.94,492.83 580.87,490.25 601.80,457.03 622.73,495.07 643.66,504.20 664.59,513.49 685.51,505.74 706.44,483.37 727.37,492.83 748.30,500.24 769.23,494.56 790.16,502.65 811.09,445.15 832.02,473.04 852.95,487.67 873.88,500.58 894.81,503.68 915.73,506.26 936.66,483.37 957.59,495.07 978.52,510.39 999.45,511.25 1020.38,449.80 1041.31,479.75 1062.24,509.70 1083.17,496.79 1104.10,507.98 1125.03,506.26 1145.95,478.72 1166.88,506.26 1187.81,502.65 1208.74,491.63 1229.67,492.83 1250.60,480.78 1271.53,504.02" fill="none" stroke="#e3bf0d" stroke-width="1.35" stroke-linejoin="round"/>
<rect x="10.40" y="537.10" width="7.8" height="1.8" rx="0.6" fill="#73BF69"/>
<text x="22.30" y="540.30" font-size="7" text-anchor="start" fill="#ccccdc" font-weight="normal" stroke="#ccccdc" stroke-width="0.2">go routines</text>
<rect x="1248.00" y="537.10" width="7.8" height="1.8" rx="0.6" fill="#F2CC0C"/>
<text x="1259.90" y="540.30" font-size="7" text-anchor="start" fill="#ccccdc" font-weight="normal" stroke="#ccccdc" stroke-width="0.2">memory usage</text>
<circle cx="99.6" cy="418.8" r="3.4" fill="none" stroke="#80818d" stroke-width="0.9"/><path d="M99.6 418.6 V420.4 M99.6 417.2 V417.7" stroke="#80818d" stroke-width="0.6" stroke-opacity="0.7"/>
</svg></body></html>
